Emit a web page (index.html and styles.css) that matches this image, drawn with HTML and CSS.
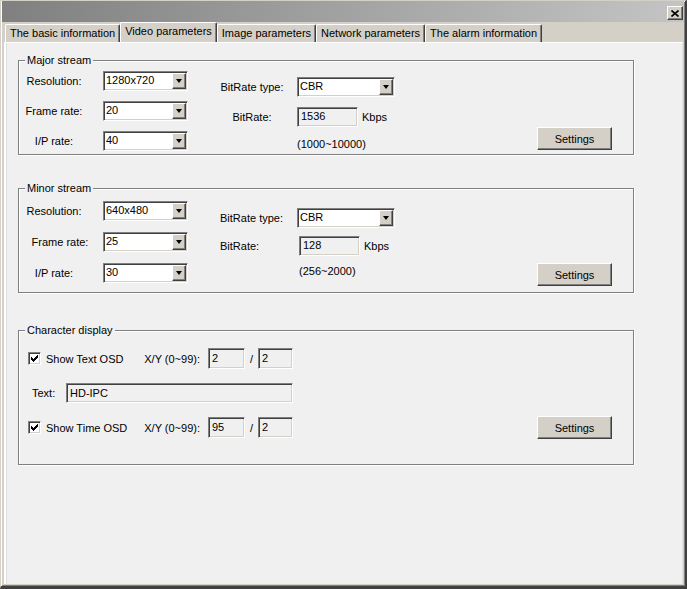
FILE: index.html
```html
<!DOCTYPE html>
<html>
<head>
<meta charset="utf-8">
<title>Video parameters</title>
<link rel="stylesheet" href="styles.css">
</head>
<body>
<div class="window">
  <div class="titlebar">
    <button class="close" aria-label="Close"><svg width="8" height="7" viewBox="0 0 8 7"><path d="M0.5 0.5 L7.5 6.5 M7.5 0.5 L0.5 6.5" stroke="#000" stroke-width="1.6" fill="none"/></svg></button>
  </div>
  <div class="tabs">
    <div class="tab">The basic information</div>
    <div class="tab active">Video parameters</div>
    <div class="tab">Image parameters</div>
    <div class="tab">Network parameters</div>
    <div class="tab">The alarm information</div>
  </div>
  <div class="panel">
    <div class="group g-major">
      <div class="legend">Major stream</div>
      <div class="col-left">
        <div class="row"><span class="lbl">Resolution:</span><div class="combo"><span class="val">1280x720</span><span class="drop"><i class="arrow"></i></span></div></div>
        <div class="row"><span class="lbl">Frame rate:</span><div class="combo"><span class="val">20</span><span class="drop"><i class="arrow"></i></span></div></div>
        <div class="row"><span class="lbl">I/P rate:</span><div class="combo"><span class="val">40</span><span class="drop"><i class="arrow"></i></span></div></div>
      </div>
      <div class="col-right">
        <div class="row"><span class="rlbl">BitRate type:</span><div class="combo wide"><span class="val">CBR</span><span class="drop"><i class="arrow"></i></span></div></div>
        <div class="row"><span class="rlbl">BitRate:</span><div class="field rate">1536</div><span class="unit">Kbps</span></div>
        <div class="row text-row"><span class="range">(1000~10000)</span></div>
      </div>
      <div class="col-btn"><button class="btn">Settings</button></div>
    </div>

    <div class="group g-minor">
      <div class="legend">Minor stream</div>
      <div class="col-left">
        <div class="row"><span class="lbl">Resolution:</span><div class="combo"><span class="val">640x480</span><span class="drop"><i class="arrow"></i></span></div></div>
        <div class="row"><span class="lbl shift">Frame rate:</span><div class="combo"><span class="val">25</span><span class="drop"><i class="arrow"></i></span></div></div>
        <div class="row"><span class="lbl">I/P rate:</span><div class="combo"><span class="val">30</span><span class="drop"><i class="arrow"></i></span></div></div>
      </div>
      <div class="col-right">
        <div class="row"><span class="rlbl left">BitRate type:</span><div class="combo wide"><span class="val">CBR</span><span class="drop"><i class="arrow"></i></span></div></div>
        <div class="row"><span class="rlbl left">BitRate:</span><div class="field rate nudge">128</div><span class="unit">Kbps</span></div>
        <div class="row text-row"><span class="range nudge">(256~2000)</span></div>
      </div>
      <div class="col-btn"><button class="btn">Settings</button></div>
    </div>

    <div class="group g-char">
      <div class="legend">Character display</div>
      <div class="crow">
        <span class="check"><svg width="7" height="7" viewBox="0 0 7 7"><path d="M0 2h1v1h1v1h1v-1h1v-1h1v-1h1v-1h1v3h-1v1h-1v1h-1v1h-1v1h-1v-1h-1v-1h-1z" fill="#000"/></svg></span>
        <span class="clbl">Show Text OSD</span>
        <span class="xy">X/Y (0~99):</span>
        <div class="field xyf">2</div>
        <span class="slash">/</span>
        <div class="field xyf2">2</div>
      </div>
      <div class="crow r2">
        <span class="tlbl">Text:</span>
        <div class="field text">HD-IPC</div>
      </div>
      <div class="crow r3">
        <span class="check"><svg width="7" height="7" viewBox="0 0 7 7"><path d="M0 2h1v1h1v1h1v-1h1v-1h1v-1h1v-1h1v3h-1v1h-1v1h-1v1h-1v1h-1v-1h-1v-1h-1z" fill="#000"/></svg></span>
        <span class="clbl">Show Time OSD</span>
        <span class="xy">X/Y (0~99):</span>
        <div class="field xyf">95</div>
        <span class="slash">/</span>
        <div class="field xyf2">2</div>
        <button class="btn push">Settings</button>
      </div>
    </div>
  </div>
</div>
</body>
</html>
```

FILE: styles.css
```css
* { box-sizing: border-box; }
html, body { margin: 0; padding: 0; }
body {
  font-family: "Liberation Sans", Arial, sans-serif;
  font-size: 11px;
  color: #000;
  background: #d4d0c8;
}
.window {
  width: 687px;
  height: 589px;
  display: flex;
  flex-direction: column;
  background: #d4d0c8;
  border-style: solid;
  border-width: 1px 2px 3px 1px;
  border-color: #d4d0c8 #404040 #404040 #d4d0c8;
  box-shadow: inset 1px 1px 0 #fff, inset -1px -1px 0 #808080;
  padding: 0 2px 2px 3px;
}
.titlebar {
  height: 21px;
  flex: none;
  margin: 0 -1px 0 -2px;
  background: linear-gradient(to right, #808080, #c4c4c4);
  display: flex;
  justify-content: flex-end;
  align-items: flex-start;
}
.close {
  width: 16px;
  height: 14px;
  margin: 5px 1px 0 0;
  padding: 0;
  background: #d4d0c8;
  border: 1px solid;
  border-color: #fff #404040 #404040 #fff;
  box-shadow: inset -1px -1px 0 #808080;
  display: flex;
  align-items: center;
  justify-content: center;
}
.tabs {
  height: 20px;
  flex: none;
  display: flex;
  align-items: flex-end;
  padding-left: 1px;
}
.tab {
  height: 18px;
  padding: 0 4px;
  line-height: 17px;
  background: #d4d0c8;
  border-top: 1px solid #fff;
  border-left: 1px solid #fff;
  border-right: 1px solid #404040;
  box-shadow: inset -1px 0 0 #808080;
  border-radius: 2px 2px 0 0;
  white-space: nowrap;
}
.tab.active {
  height: 20px;
  padding-bottom: 2px;
  line-height: 16px;
}
.panel {
  flex: 1;
  background: #f0f0f0;
  border-top: 1px solid #fff;
  border-left: 2px solid #fff;
  border-right: 1px solid #e2e2e2;
  box-shadow: inset 1px 0 0 #dedede;
  padding: 17px 0 0 12px;
}
.group {
  position: relative;
  width: 616px;
  border: 1px solid #808080;
  box-shadow: 1px 1px 0 #fff, inset 1px 1px 0 #fff;
  display: flex;
}
.g-major { height: 95px; }
.g-minor { height: 105px; margin-top: 33px; }
.g-char { height: 135px; margin-top: 37px; flex-direction: column; padding-top: 17px; }
.legend {
  position: absolute;
  top: -7px;
  left: 6px;
  padding: 0 2px;
  line-height: 13px;
  background: #f0f0f0;
}
.col-left, .col-right {
  display: flex;
  flex-direction: column;
}
.col-left { padding-top: 10px; gap: 10px; }
.g-minor .col-left { padding-top: 12px; gap: 11px; }
.col-right { margin-left: 27px; padding-top: 16px; gap: 10px; }
.g-minor .col-right { padding-top: 19px; gap: 8px; }
.row {
  display: flex;
  align-items: center;
  height: 20px;
}
.row.text-row { height: 14px; padding-left: 82px; }
.lbl {
  width: 70px;
  margin-right: 14px;
  text-align: center;
  white-space: nowrap;
}
.lbl.shift { padding-left: 12px; }
.rlbl {
  width: 74px;
  margin-right: 8px;
  text-align: center;
  white-space: nowrap;
}
.rlbl.left { text-align: left; padding-left: 5px; }
.combo {
  width: 85px;
  height: 20px;
  display: flex;
  background: #fff;
  border: 1px solid;
  border-color: #808080 #fff #fff #808080;
  box-shadow: inset 1px 1px 0 #404040, inset -1px -1px 0 #d4d0c8;
}
.combo.wide { width: 98px; }
.val {
  flex: 1;
  padding-left: 2px;
  line-height: 17px;
  white-space: nowrap;
}
.drop {
  width: 14px;
  margin: 1px 1px 1px 0;
  background: #d4d0c8;
  border: 1px solid;
  border-color: #fff #404040 #404040 #fff;
  box-shadow: inset -1px -1px 0 #808080;
  display: flex;
  align-items: center;
  justify-content: center;
}
.arrow {
  width: 0;
  height: 0;
  border-left: 3.5px solid transparent;
  border-right: 3.5px solid transparent;
  border-top: 4px solid #000;
}
.field {
  height: 20px;
  padding: 1px 3px 0;
  line-height: 14px;
  background: #f0f0f0;
  border: 1px solid;
  border-color: #808080 #fff #fff #808080;
  box-shadow: inset 1px 1px 0 #404040, inset -1px -1px 0 #d4d0c8;
  white-space: nowrap;
}
.field.rate { width: 61px; }
.nudge { margin-left: 2px; }
.unit { margin-left: 4px; }
.range { line-height: 14px; }
.col-btn { margin-left: auto; margin-right: 21px; padding-top: 66px; }
.g-minor .col-btn { padding-top: 74px; }
.btn {
  width: 75px;
  height: 23px;
  padding: 0;
  font: inherit;
  color: #000;
  background: #d4d0c8;
  border: 1px solid;
  border-color: #fff #404040 #404040 #fff;
  box-shadow: inset -1px -1px 0 #808080;
}
.crow {
  display: flex;
  align-items: center;
  height: 21px;
  padding-left: 9px;
}
.crow.r2 { height: 20px; margin-top: 14px; padding-left: 13px; }
.crow.r3 { height: 23px; margin-top: 13px; }
.check {
  width: 13px;
  height: 13px;
  margin-right: 5px;
  background: #fff;
  border: 1px solid;
  border-color: #808080 #fff #fff #808080;
  box-shadow: inset 1px 1px 0 #404040, inset -1px -1px 0 #d4d0c8;
  display: flex;
  align-items: center;
  justify-content: center;
}
.clbl { width: 96px; white-space: nowrap; }
.xy { width: 66px; padding-right: 8px; text-align: right; white-space: nowrap; }
.field.xyf { width: 37px; height: 21px; padding-top: 2px; }
.field.xyf2 { width: 35px; height: 21px; padding-top: 2px; }
.slash { width: 13px; text-align: center; }
.tlbl { width: 34px; }
.field.text { width: 227px; padding-top: 2px; }
.btn.push { margin-left: auto; margin-right: 21px; }
```
